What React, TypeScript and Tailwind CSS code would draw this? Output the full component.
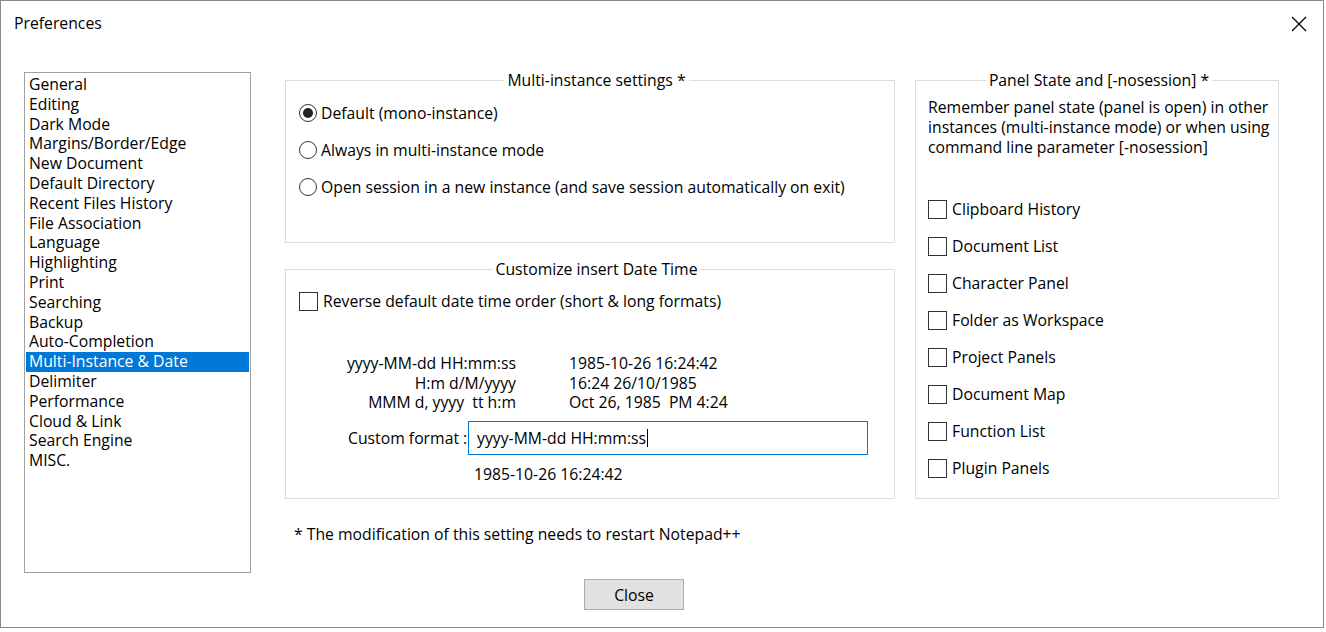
import { useState } from "react";

const pages = [
  "General",
  "Editing",
  "Dark Mode",
  "Margins/Border/Edge",
  "New Document",
  "Default Directory",
  "Recent Files History",
  "File Association",
  "Language",
  "Highlighting",
  "Print",
  "Searching",
  "Backup",
  "Auto-Completion",
  "Multi-Instance & Date",
  "Delimiter",
  "Performance",
  "Cloud & Link",
  "Search Engine",
  "MISC.",
];

const panels = [
  "Clipboard History",
  "Document List",
  "Character Panel",
  "Folder as Workspace",
  "Project Panels",
  "Document Map",
  "Function List",
  "Plugin Panels",
];

const formats = [
  ["yyyy-MM-dd HH:mm:ss", "1985-10-26 16:24:42"],
  ["H:m d/M/yyyy", "16:24 26/10/1985"],
  ["MMM d, yyyy  tt h:m", "Oct 26, 1985  PM 4:24"],
];

function Radio({ checked, label }: { checked?: boolean; label: string }) {
  return (
    <div className="flex h-[20px] items-center">
      <span className="grid h-[18px] w-[18px] place-items-center rounded-full border border-[#333]">
        {checked && <span className="h-[10px] w-[10px] rounded-full bg-[#222]" />}
      </span>
      <span className="ml-[4px] whitespace-pre">{label}</span>
    </div>
  );
}

function Check({ label }: { label: string }) {
  return (
    <div className="flex h-[20px] items-center">
      <span className="h-[19px] w-[19px] border border-[#333] bg-white" />
      <span className="ml-[5px] whitespace-pre">{label}</span>
    </div>
  );
}

export default function App() {
  const [sel, setSel] = useState("Multi-Instance & Date");
  return (
    <div
      className="h-[632px] w-[1326px] bg-white text-[15.75px] leading-[20px] text-black"
      style={{ fontFamily: '"Open Sans", "Noto Sans", sans-serif' }}
    >
      <div className="flex h-[628px] w-[1324px] flex-col border border-[#8a8a8a] bg-white">
        {/* title bar */}
        <div className="flex h-[44px] items-center justify-between pl-[13px] pr-[16px]">
          <span>Preferences</span>
          <svg width="16" height="16" viewBox="0 0 16 16" className="mt-[2px] text-black">
            <path d="M1 1 L15 15 M15 1 L1 15" stroke="currentColor" strokeWidth="1.3" />
          </svg>
        </div>

        <div className="flex pl-[23px] pt-[25px]">
          {/* page list */}
          <div className="mt-[2px] h-[501px] w-[227px] border border-[#a0a0a0] px-[1px] pt-[2px]">
            {pages.map((p) => (
              <div
                key={p}
                onClick={() => setSel(p)}
                className={
                  "h-[19.8px] whitespace-nowrap pl-[3px] leading-[19.8px] " +
                  (p === sel ? "bg-[#0078d7] text-white" : "")
                }
              >
                {p}
              </div>
            ))}
          </div>

          <div className="ml-[34px] flex flex-col">
            <div className="flex gap-[20px]">
              <div className="flex w-[610px] flex-col">
                <fieldset className="h-[173px] border border-[#dcdcdc] pl-[13px]">
                  <legend className="mx-auto px-[3px]">Multi-instance settings *</legend>
                  <div className="mt-[13px] flex flex-col gap-[17px]">
                    <Radio checked label="Default (mono-instance)" />
                    <Radio label="Always in multi-instance mode" />
                    <Radio label="Open session in a new instance (and save session automatically on exit)" />
                  </div>
                </fieldset>

                <fieldset className="mt-[16px] h-[240px] border border-[#dcdcdc] pl-[13px]">
                  <legend className="mx-auto px-[3px]">Customize insert Date Time</legend>
                  <div className="mt-[12px]">
                    <Check label="Reverse default date time order (short & long formats)" />
                  </div>
                  <div className="-ml-[13px] mt-[43px] grid grid-cols-[230px_1fr] gap-x-[53px]">
                    {formats.map(([f, v]) => (
                      <div key={f} className="contents">
                        <div className="h-[19.5px] whitespace-pre text-right leading-[19.5px]">{f}</div>
                        <div className="h-[19.5px] whitespace-pre leading-[19.5px]">{v}</div>
                      </div>
                    ))}
                  </div>
                  <div className="mt-[8px] flex items-center">
                    <span className="ml-[49px] w-[117px] whitespace-pre text-right">Custom format :</span>
                    <div className="ml-[3px] flex h-[34px] w-[400px] items-center border border-[#0078d7] pl-[8px]">
                      <span>yyyy-MM-dd HH:mm:ss</span>
                      <span className="ml-[1px] h-[18px] w-[1px] bg-black" />
                    </div>
                  </div>
                  <div className="ml-[175px] mt-[9px]">1985-10-26 16:24:42</div>
                </fieldset>
              </div>

              <fieldset className="h-[429px] w-[364px] border border-[#dcdcdc] pl-[12px] pr-[8px]">
                <legend className="mx-auto px-[3px]">Panel State and [-nosession] *</legend>
                <p className="mt-[7px]">
                  Remember panel state (panel is open) in other instances (multi-instance mode) or when using
                  command line parameter [-nosession]
                </p>
                <div className="mt-[42px] flex flex-col gap-[17px]">
                  {panels.map((p) => (
                    <Check key={p} label={p} />
                  ))}
                </div>
              </fieldset>
            </div>

            <div className="ml-[9px] mt-[25px]">* The modification of this setting needs to restart Notepad++</div>

            <button className="ml-[299px] mt-[35px] h-[31px] w-[100px] border border-[#adadad] bg-[#e1e1e1]">
              Close
            </button>
          </div>
        </div>
      </div>
    </div>
  );
}
